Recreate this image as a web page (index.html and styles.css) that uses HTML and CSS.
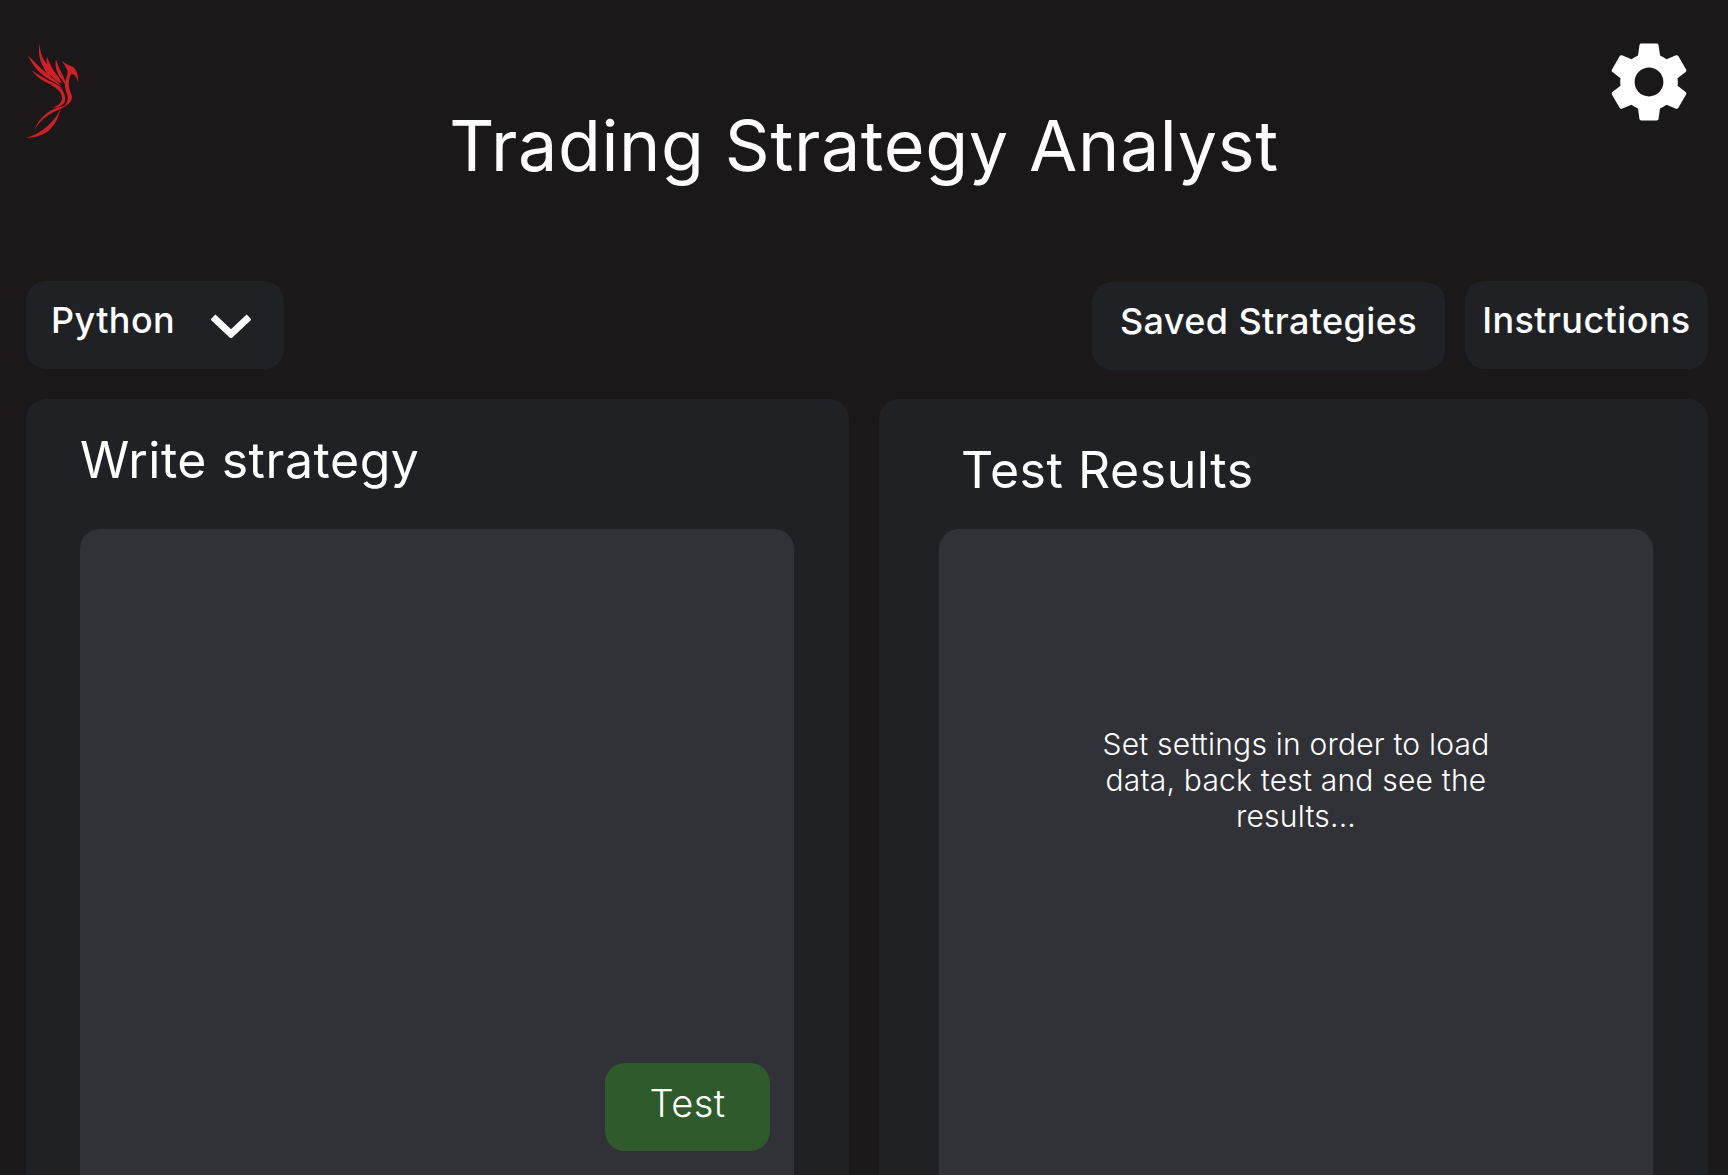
FILE: index.html
```html
<!DOCTYPE html>
<html lang="en">
<head>
<meta charset="utf-8">
<title>Trading Strategy Analyst</title>
<link rel="stylesheet" href="styles.css">
</head>
<body>
<div class="page">
  <header class="header">
    <svg class="logo" viewBox="0 0 360 390" aria-hidden="true">
      <g fill="#d11f26">
        <path d="M118 72 C114 105 120 132 140 154 C150 166 165 180 182 192 C170 165 134 130 127 110 C122 98 120 86 118 72Z"/>
        <path d="M84 106 C98 140 124 167 155 182 C165 187 175 193 184 200 C172 180 142 165 122 144 C108 131 96 119 84 106Z"/>
        <path d="M95 151 C114 176 140 192 172 200 C180 202 186 205 191 210 C181 194 151 186 131 173 C118 166 106 159 95 151Z"/>
        <path d="M141 110 C136 135 147 156 165 172 C172 178 178 185 186 192 C178 170 160 155 152 135 C148 127 144 119 141 110Z"/>
        <path d="M168 118 C163 140 171 161 186 180 C190 185 193 190 197 196 C196 175 184 160 178 145 C174 136 171 127 168 118Z"/>
        <path d="M128 120 C126 140 137 159 153 174 C147 152 135 140 128 120Z"/>
        <path d="M152 195 C171 191 187 204 193 222 C199 240 195 251 183 257 C173 262 165 263 157 263 C172 258 184 250 186 236 C188 220 172 204 152 195Z"/>
        <path d="M186 122 C198 132 208 136 218 140 C229 146 235 165 235 187 C231 175 226 166 218 162 C212 160 209 170 207 184 C205 200 209 212 215 226 C219 241 207 255 192 259 C204 246 206 234 200 220 C193 206 193 185 201 168 C205 158 203 150 197 142 C193 135 190 128 186 122Z"/>
        <path d="M201 257 C172 259 146 271 127 292 C117 303 109 315 104 329 C118 305 140 285 168 273 C179 268 191 262 201 257Z"/>
        <path d="M183 263 C173 288 151 312 128 330 C115 340 98 348 79 353 C105 353 131 345 149 329 C166 313 177 288 183 263Z"/>
      </g>
    </svg>
    <h1 class="title">Trading Strategy Analyst</h1>
    <svg class="gear" viewBox="0 0 24 24" aria-hidden="true">
      <path fill="#fff" d="M19.14 12.94c.04-.3.06-.61.06-.94 0-.32-.02-.64-.07-.94l2.03-1.58c.18-.14.23-.41.12-.61l-1.92-3.32c-.12-.22-.37-.29-.59-.22l-2.39.96c-.5-.38-1.03-.7-1.62-.94l-.36-2.54c-.04-.24-.24-.41-.48-.41h-3.84c-.24 0-.43.17-.47.41l-.36 2.54c-.59.24-1.13.57-1.62.94l-2.39-.96c-.22-.08-.47 0-.59.22L2.74 8.87c-.12.21-.08.47.12.61l2.03 1.58c-.05.3-.09.63-.09.94s.02.64.07.94l-2.03 1.58c-.18.14-.23.41-.12.61l1.92 3.32c.12.22.37.29.59.22l2.39-.96c.5.38 1.03.7 1.62.94l.36 2.54c.05.24.24.41.48.41h3.84c.24 0 .44-.17.47-.41l.36-2.54c.59-.24 1.13-.56 1.62-.94l2.39.96c.22.08.47 0 .59-.22l1.92-3.32c.12-.22.07-.47-.12-.61l-2.01-1.58zM12 15.6c-1.98 0-3.6-1.62-3.6-3.6s1.62-3.6 3.6-3.6 3.6 1.62 3.6 3.6-1.62 3.6-3.6 3.6z"/>
    </svg>
  </header>

  <div class="controls">
    <button class="btn select">
      <span>Python</span>
      <svg class="chevron" viewBox="0 0 40 25" aria-hidden="true"><path d="M2 4 L20 21 L38 4" fill="none" stroke="#fff" stroke-width="7"/></svg>
    </button>
    <div class="actions">
      <button class="btn saved">Saved Strategies</button>
      <button class="btn instructions">Instructions</button>
    </div>
  </div>

  <main class="panels">
    <section class="panel panel-left">
      <h2 class="panel-title">Write strategy</h2>
      <div class="box editor">
        <button class="test">Test</button>
      </div>
    </section>
    <section class="panel panel-right">
      <h2 class="panel-title results-title">Test Results</h2>
      <div class="box results">
        <p class="hint">Set settings in order to load data, back test and see the results...</p>
      </div>
    </section>
  </main>
</div>
</body>
</html>
```

FILE: styles.css
```css
* { box-sizing: border-box; letter-spacing: .011em; }
html, body { margin: 0; height: 100%; overflow: hidden; background: #1a1819; }
body { font-family: Inter, "Noto Sans", sans-serif; color: #fff; }
.page { width: 1728px; height: 1175px; overflow: hidden; }

.header { height: 281px; display: grid; grid-template-columns: 1fr auto 1fr; padding-right: 31px; }
.logo { width: 120px; height: 130px; margin-top: 20px; }
.title { margin: 107px 0 0 31px; font-size: 70px; line-height: 78px; font-weight: 400; letter-spacing: .009em; text-align: center; }
.gear { width: 96px; height: 96px; margin-top: 34px; justify-self: end; }

.controls { display: flex; justify-content: space-between; align-items: flex-start; height: 88px; padding: 0 20px 0 26px; }
.actions { display: flex; gap: 20px; align-items: flex-start; }
.btn { height: 88px; border: 0; border-radius: 20px; background: #202125; color: #fff; font: 500 36px/44px Inter, sans-serif; padding: 17px 0 0; display: flex; align-items: flex-start; }
.select { width: 258px; padding-left: 25px; }
.chevron { width: 40px; height: 25px; margin: 15px 0 0 36px; }
.saved { width: 353px; margin-top: 1px; justify-content: center; }
.instructions { width: 243px; justify-content: center; }

.panels { display: grid; grid-template-columns: 823px 829px; gap: 30px; margin-top: 30px; padding-left: 26px; }
.panel { background: #202125; border-radius: 20px 20px 0 0; height: 900px; }
.panel-left { padding: 31px 55px 0 54px; }
.panel-right { padding: 41px 55px 0 60px; }
.panel-title { margin: 0; font-size: 50px; line-height: 60px; font-weight: 400; }
.results-title { margin-left: 22px; }
.panel-left .box { margin-top: 39px; }
.panel-right .box { margin-top: 29px; }
.box { width: 714px; height: 800px; border-radius: 20px 20px 0 0; background: #313237; position: relative; }
.test { position: absolute; top: 534px; right: 24px; width: 165px; height: 88px; border: 0; border-radius: 20px; background: #2e5a2c; color: #fff; font: 300 38px/46px Inter, sans-serif; padding: 0 0 8px; }
.results { padding: 197px 150px 0; }
.hint { margin: 0; font-size: 30px; line-height: 36px; font-weight: 300; letter-spacing: .007em; text-align: center; }
```
